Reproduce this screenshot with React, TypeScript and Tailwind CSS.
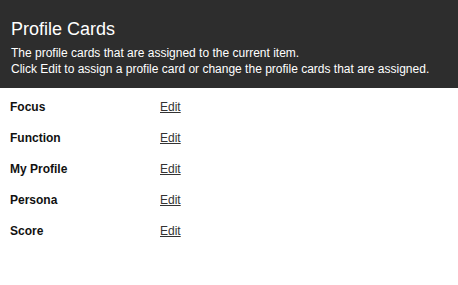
const items = ["Focus", "Function", "My Profile", "Persona", "Score"];

export default function App() {
  return (
    <div className="w-[458px] h-[285px] bg-white font-['Liberation_Sans',Arial,sans-serif]">
      <div className="bg-[#2d2d2d] text-white px-[11px] pt-[18px] pb-[11px]">
        <h1 className="text-[18px] leading-[22px]">Profile Cards</h1>
        <div className="mt-[5px] text-[12px] leading-[16px]">
          <p>The profile cards that are assigned to the current item.</p>
          <p>Click Edit to assign a profile card or change the profile cards that are assigned.</p>
        </div>
      </div>
      <div className="pt-[4px] pl-[10px]">
        {items.map((item) => (
          <div key={item} className="flex h-[31px] items-center text-[12px] leading-[31px]">
            <span className="w-[150px] font-bold text-[#111]">{item}</span>
            <a href="#" className="text-[#333] underline">
              Edit
            </a>
          </div>
        ))}
      </div>
    </div>
  );
}
